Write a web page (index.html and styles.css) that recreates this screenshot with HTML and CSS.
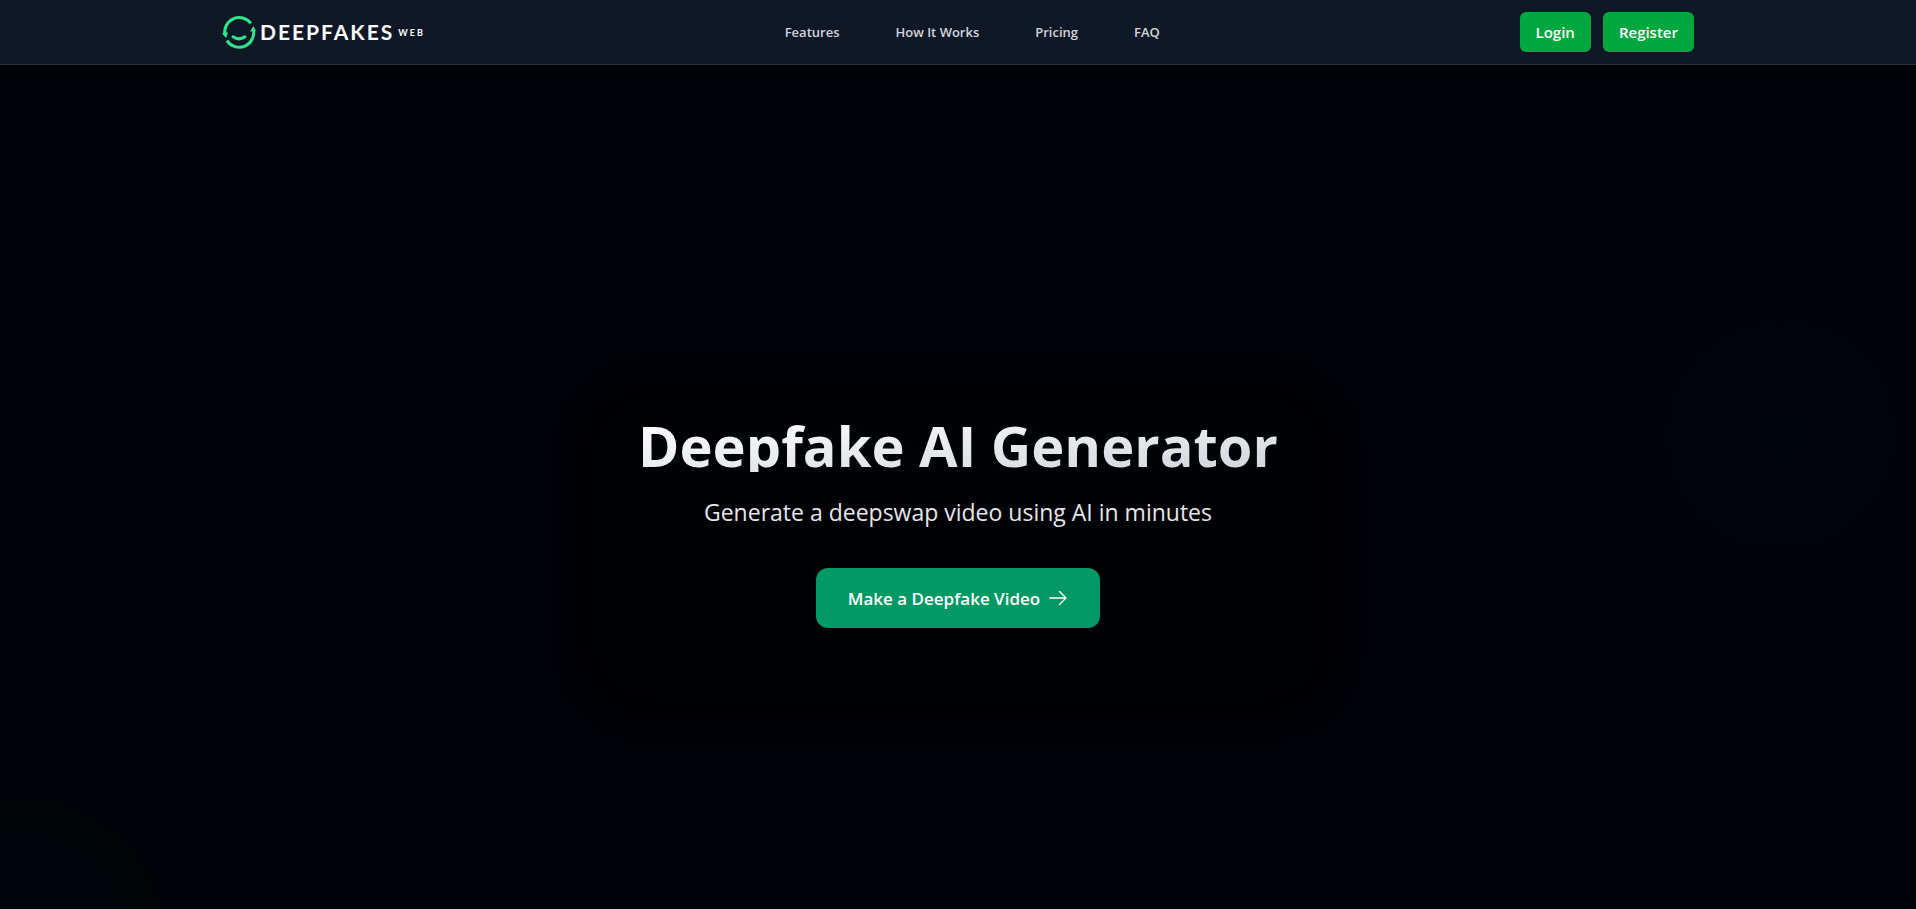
FILE: index.html
```html
<!DOCTYPE html>
<html lang="en">
<head>
<meta charset="utf-8">
<meta name="viewport" content="width=device-width, initial-scale=1">
<title>Deepfakes Web</title>
<link rel="stylesheet" href="styles.css">
</head>
<body>
<header class="site-header">
  <div class="header-inner">
    <a class="logo" href="#">
      <svg class="logo-mark" viewBox="0 0 34 34" aria-hidden="true">
        <g fill="none" stroke="currentColor" stroke-width="3">
          <path d="M28.8 8.4A14.5 14.5 0 0 0 3 20"/>
          <path d="M5 25.6A14.5 14.5 0 0 0 31.2 14"/>
          <path d="M11 21.8Q17 26 23 21.8" stroke-linecap="round"/>
        </g>
        <path fill="currentColor" d="M0 18.6l6-1.4-1.8 5.8zM28 16.4l3.400-5.200 2.600 4.800z"/>
      </svg>
      <span class="logo-name">DEEPFAKES</span>
      <span class="logo-suffix">WEB</span>
    </a>
    <nav class="nav" aria-label="Main">
      <a href="#features">Features</a>
      <a href="#how">How It Works</a>
      <a href="#pricing">Pricing</a>
      <a href="#faq">FAQ</a>
    </nav>
    <div class="account">
      <button class="account-button" type="button">Login</button>
      <button class="account-button" type="button">Register</button>
    </div>
  </div>
</header>
<main class="hero">
  <div class="hero-content">
    <h1 class="hero-title">Deepfake AI Generator</h1>
    <p class="hero-text">Generate a deepswap video using AI in minutes</p>
    <a class="cta" href="#make">Make a Deepfake Video
      <svg class="cta-arrow" viewBox="0 0 20 20" fill="none" stroke="currentColor" stroke-width="1.3" stroke-linecap="round" stroke-linejoin="round" aria-hidden="true"><path d="M2 10h16M11.5 3.500L18 10l-6.500 6.500"/></svg>
    </a>
  </div>
</main>
</body>
</html>
```
FILE: styles.css
```css
* {
  box-sizing: border-box;
}

body {
  margin: 0;
  min-height: 100vh;
  display: flex;
  flex-direction: column;
  background: #01010a;
  color: #fff;
  font-family: "Open Sans", "Noto Sans", sans-serif;
}

a {
  color: inherit;
  text-decoration: none;
}

.site-header {
  background: #101827;
  border-bottom: 1px solid #292c32;
}

.header-inner {
  display: flex;
  align-items: center;
  justify-content: space-between;
  max-width: 1536px;
  height: 64px;
  margin: 0 auto;
  padding: 0 32px;
}

.logo {
  display: flex;
  align-items: center;
  gap: 4px;
  font-family: Lato, sans-serif;
  font-weight: 700;
}

.logo-mark {
  width: 34px;
  height: 34px;
  color: #2ee589;
}

.logo-name {
  font-size: 21px;
  line-height: 24px;
  letter-spacing: 2px;
}

.logo-suffix {
  font-size: 9px;
  letter-spacing: 2px;
}

.nav {
  display: flex;
  gap: 56px;
  color: #d1d5dc;
  font-size: 13px;
  font-weight: 600;
}

.account {
  display: flex;
  gap: 12px;
}

.account-button {
  height: 40px;
  padding: 0 16px;
  border: 0;
  border-radius: 6px;
  background: #00a63e;
  color: #fff;
  font: inherit;
  font-size: 15px;
  font-weight: 600;
}

.hero {
  flex: 1;
  display: flex;
  align-items: center;
  justify-content: center;
  padding-top: 124px;
  background:
    radial-gradient(circle at 93% 370px, #00040b 0, #00030a 120px, transparent 170px),
    radial-gradient(circle at 20px 104%, #00050b 0, #00050b 100px, #000506 130px, #00030a 160px, transparent 190px),
    #01010a;
}

.hero-content {
  display: flex;
  flex-direction: column;
  align-items: center;
  padding: 24px 48px 76px;
  border-radius: 64px;
  text-align: center;
  background: #000104;
  box-shadow: 0 0 24px 12px #000104;
}

.hero-title {
  margin: 0 0 20px;
  background: linear-gradient(to bottom right, #fff, #d1d5dc);
  background-clip: text;
  -webkit-background-clip: text;
  color: transparent;
  font-size: 56px;
  font-weight: 700;
  line-height: 54px;
}

.hero-text {
  margin: 0 0 36px;
  color: #e5e7eb;
  font-size: 23px;
  line-height: 40px;
}

.cta {
  display: flex;
  align-items: center;
  gap: 8px;
  height: 60px;
  padding: 0 32px;
  border-radius: 12px;
  background: #009966;
  font-size: 17px;
  font-weight: 600;
}

.cta-arrow {
  width: 20px;
  height: 20px;
}
```
